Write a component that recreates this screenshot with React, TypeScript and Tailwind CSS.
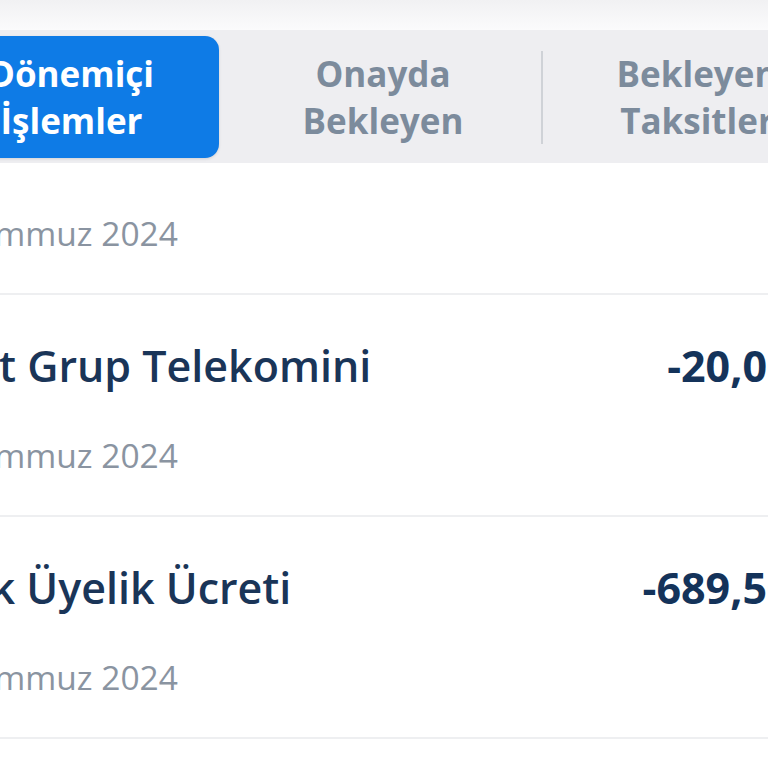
import React from "react";

type Row = {
  title: string;
  amount: string;
  date: string;
};

// first entry is scrolled up under the tab bar, only its date is left in view
const TOP_DATE = "15 Temmuz 2024";

const ROWS: Row[] = [
  { title: "Ünet Grup Telekomini", amount: "-20,00 TL", date: "12 Temmuz 2024" },
  { title: "Aylık Üyelik Ücreti", amount: "-689,50 TL", date: "10 Temmuz 2024" },
  { title: "Market Alışverişi", amount: "-245,90 TL", date: "08 Temmuz 2024" },
];

function DateLine({ children }: { children: React.ReactNode }) {
  return (
    <div className="-ml-[12px] text-[33.5px] leading-[44px] text-[#8a94a1] whitespace-nowrap">
      {children}
    </div>
  );
}

function TransactionRow({ row }: { row: Row }) {
  return (
    <div className="border-b-2 border-[#eeeff1] pt-[47px] pb-[38px]">
      <div className="flex h-[48px] items-center justify-between">
        <span className="-ml-[7px] text-[43px] font-semibold leading-[48px] text-[#1a3558] whitespace-nowrap">
          {row.title}
        </span>
        <span className="text-[43px] font-bold leading-[48px] text-[#14335a] whitespace-nowrap">
          {row.amount}
        </span>
      </div>
      <div className="mt-[43px]">
        <DateLine>{row.date}</DateLine>
      </div>
    </div>
  );
}

export default function App() {
  return (
    <div
      className="flex h-[768px] w-[768px] flex-col overflow-hidden bg-white"
      style={{ fontFamily: '"Open Sans", "Noto Sans", sans-serif' }}
    >
      <div className="h-[30px] shrink-0 bg-gradient-to-b from-[#f1f1f3] to-[#fbfbfc]" />

      {/* tab switcher */}
      <div className="-ml-[82px] flex h-[133px] w-[940px] shrink-0 items-stretch bg-[#eeeef1] pt-[6px] pb-[5px] pl-[6px]">
        <div className="flex w-[295px] items-center justify-center rounded-[14px] bg-[#0e7be6] shadow-[0_1px_3px_rgba(0,0,0,0.12)]">
          <span className="text-center text-[35px] font-bold leading-[47px] text-white">
            Dönemiçi
            <br />
            İşlemler
          </span>
        </div>
        <div className="ml-[6px] flex w-[316px] items-center justify-center">
          <span className="text-center text-[35px] font-bold leading-[47px] text-[#7c8b9c]">
            Onayda
            <br />
            Bekleyen
          </span>
        </div>
        <div className="h-[93px] w-[2px] self-center bg-[#cfd2d7]" />
        <div className="flex w-[308px] items-center justify-center">
          <span className="text-center text-[35px] font-bold leading-[47px] text-[#7c8b9c]">
            Bekleyen
            <br />
            Taksitler
          </span>
        </div>
      </div>

      {/* transactions list */}
      <div className="min-h-0 flex-1 overflow-hidden">
        <div className="-ml-[78px] w-[930px]">
          <div className="border-b-2 border-[#eeeff1] pt-[48px] pb-[38px]">
            <DateLine>{TOP_DATE}</DateLine>
          </div>
          {ROWS.map((row) => (
            <TransactionRow key={row.title} row={row} />
          ))}
        </div>
      </div>
    </div>
  );
}
